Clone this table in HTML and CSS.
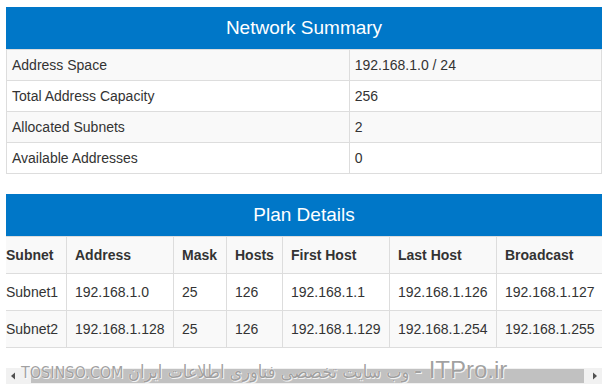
FILE: index.html
```html
<!DOCTYPE html>
<html lang="en">
<head>
<meta charset="utf-8">
<title>Subnet Planner</title>
<link rel="stylesheet" href="styles.css">
</head>
<body>
  <section class="panel">
    <div class="panel-title">Network Summary</div>
    <table class="summary">
      <tbody>
        <tr><td class="label">Address Space</td><td>192.168.1.0 / 24</td></tr>
        <tr><td class="label">Total Address Capacity</td><td>256</td></tr>
        <tr><td class="label">Allocated Subnets</td><td>2</td></tr>
        <tr><td class="label">Available Addresses</td><td>0</td></tr>
      </tbody>
    </table>
  </section>

  <section class="panel plan">
    <div class="panel-title">Plan Details</div>
    <div class="table-scroll" id="planScroll">
      <table class="plan-table">
        <colgroup>
          <col class="c-subnet"><col class="c-addr"><col class="c-mask"><col class="c-hosts">
          <col class="c-addr"><col class="c-addr"><col class="c-bcast">
        </colgroup>
        <tbody>
          <tr class="head">
            <th>Subnet</th><th>Address</th><th>Mask</th><th>Hosts</th>
            <th>First Host</th><th>Last Host</th><th>Broadcast</th>
          </tr>
          <tr>
            <td>Subnet1</td><td>192.168.1.0</td><td>25</td><td>126</td>
            <td>192.168.1.1</td><td>192.168.1.126</td><td>192.168.1.127</td>
          </tr>
          <tr>
            <td>Subnet2</td><td>192.168.1.128</td><td>25</td><td>126</td>
            <td>192.168.1.129</td><td>192.168.1.254</td><td>192.168.1.255</td>
          </tr>
        </tbody>
      </table>
    </div>
    <!-- horizontal scroll bar for the plan table -->
    <div class="hscroll">
      <span class="hscroll-btn">
        <svg width="16" height="16" viewBox="0 0 16 16"><path d="M5 8 L9 4.5 L9 11.5 Z" fill="#505050"/></svg>
      </span>
      <span class="hscroll-track"><span class="hscroll-thumb"></span></span>
      <span class="hscroll-btn">
        <svg width="16" height="16" viewBox="0 0 16 16"><path d="M11 8 L7 4.5 L7 11.5 Z" fill="#505050"/></svg>
      </span>
    </div>
    <div class="watermark">TOSINSO.COM <span class="wm-fa">وب سایت تخصصی فناوری اطلاعات ایران</span> <span class="wm-site">- ITPro.ir</span></div>
  </section>
  <script src="script.js"></script>
</body>
</html>
```

FILE: styles.css
```css
html, body {
  margin: 0;
  background: #fff;
}

body {
  padding: 7px 6px 7px;
  font-family: "Liberation Sans", Arial, sans-serif;
  font-size: 14px;
  line-height: 20px;
  color: #333;
}

.panel {
  margin-bottom: 20px;
}

.panel.plan {
  position: relative;
  margin-bottom: 0;
}

.panel-title {
  height: 42px;
  line-height: 42px;
  background: #0077c8;
  color: #fff;
  font-size: 19px;
  text-align: center;
}

/* summary key/value table */
.summary {
  width: 100%;
  border-collapse: collapse;
  border: 1px solid #ddd;
}

.summary td {
  padding: 5px;
  border: 1px solid #ddd;
  vertical-align: top;
}

.summary td.label {
  width: 57.6%;
}

.summary tr:nth-child(odd) {
  background: #f9f9f9;
}

/* plan table, scrolled a few pixels to the right */
.table-scroll {
  overflow: hidden;
}

.plan-table {
  width: 608px;
  table-layout: fixed;
  border-collapse: collapse;
  white-space: nowrap;
  margin-bottom: 20px;
}

.plan-table .c-subnet { width: 69px; }
.plan-table .c-addr { width: 107px; }
.plan-table .c-mask { width: 53px; }
.plan-table .c-hosts { width: 56px; }
.plan-table .c-bcast { width: 109px; }

.plan-table th,
.plan-table td {
  padding: 8px;
  text-align: left;
  border: 1px solid #ddd;
}

.plan-table th {
  font-weight: bold;
}

.plan-table tr:nth-child(odd) {
  background: #f9f9f9;
}

/* scroll bar */
.hscroll {
  display: flex;
  height: 16px;
  background: #f1f1f1;
}

.hscroll-btn {
  display: flex;
  width: 16px;
  height: 16px;
  flex: none;
}

.hscroll-track {
  flex: 1;
  display: flex;
  padding: 1px 2px 1px 9px;
}

.hscroll-thumb {
  flex: 1;
  background: #c1c1c1;
}

/* site watermark laid over the bottom of the panel */
.watermark {
  position: absolute;
  left: 15px;
  top: 164px;
  white-space: nowrap;
  font-family: "DejaVu Sans Condensed", "DejaVu Sans", sans-serif;
  font-size: 16px;
  line-height: 24px;
  color: rgba(125, 125, 125, 0.72);
  text-shadow: 0 0 1px #fff, 1px 1px 0 rgba(255, 255, 255, 0.8);
  pointer-events: none;
}

.watermark .wm-fa {
  font-size: 18px;
}

.watermark .wm-site {
  font-family: "Liberation Sans", sans-serif;
  font-size: 24px;
}
```

FILE: script.js
```js
var planScroll = document.getElementById('planScroll');
planScroll.scrollLeft = 9;
```
